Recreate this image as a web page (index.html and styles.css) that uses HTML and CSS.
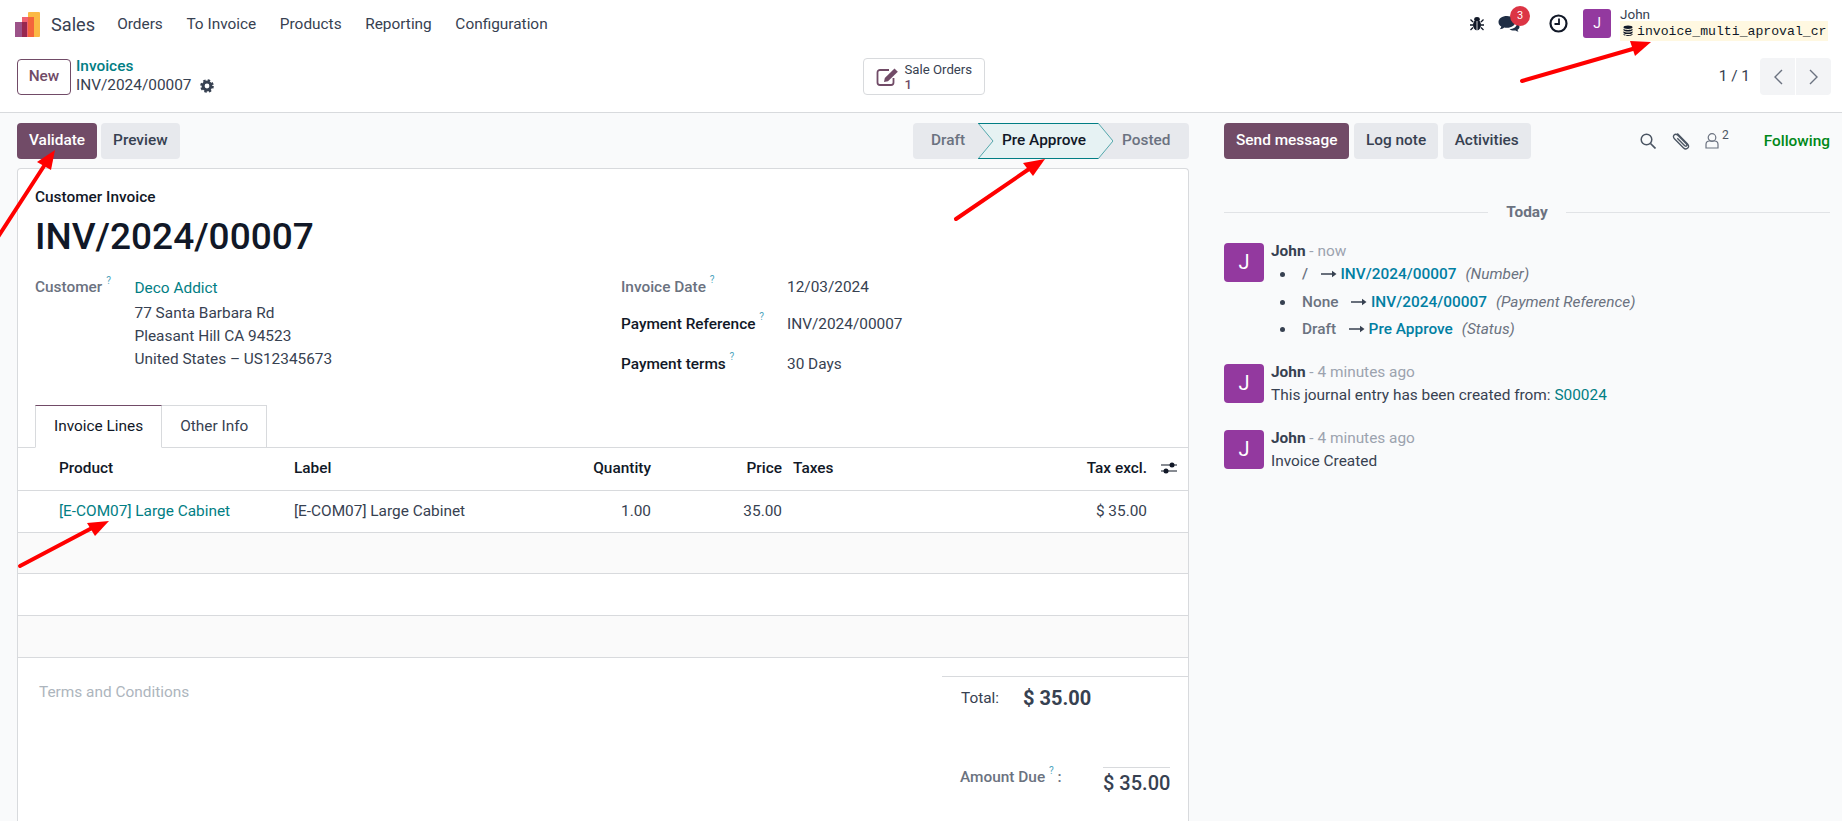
FILE: index.html
```html
<!DOCTYPE html>
<html lang="en">
<head>
<meta charset="utf-8">
<title>INV/2024/00007</title>
<link rel="stylesheet" href="styles.css">
</head>
<body>
<header class="navbar">
  <svg class="logo" viewBox="0 0 25 25" width="25" height="25">
    <rect x="13" y="0" width="12" height="25" rx="1" fill="#fbb945"/>
    <rect x="7" y="5" width="6" height="20" fill="#f06272"/>
    <rect x="13" y="5" width="6" height="20" fill="#f4653c"/>
    <rect x="0" y="10" width="7" height="15" fill="#9c5389"/>
    <rect x="7" y="10" width="5" height="15" fill="#98284f"/>
  </svg>
  <span class="brand">Sales</span>
  <nav class="menu">
    <span>Orders</span><span>To Invoice</span><span>Products</span><span>Reporting</span><span>Configuration</span>
  </nav>
  <div class="systray">
    <svg class="ico-bug" width="14" height="15" viewBox="0 0 14 15"><ellipse cx="7" cy="9" rx="4" ry="5.2" fill="#111827"/><ellipse cx="7" cy="3.2" rx="2.8" ry="2.2" fill="#111827"/><path d="M0.5 3.5 3 6M13.5 3.5 11 6M0 9h3M14 9h-3M0.5 14 3 11.5M13.5 14 11 11.5" stroke="#111827" stroke-width="1.3" fill="none"/><path d="M7 5v9" stroke="#fff" stroke-width=".8"/></svg>
    <span class="chat-wrap">
      <svg width="22" height="18" viewBox="0 0 22 18"><path d="M9 1C4 1 .5 3.6.5 7c0 2 1.200 3.500 2.800 4.600-.2 1-.8 1.900-1.600 2.700 1.800-.2 3.400-.9 4.500-1.800.9.2 1.800.3 2.800.3 4.700 0 8.300-2.600 8.300-5.800S13.700 1 9 1z" fill="#1f2e45"/><path d="M19 9c-.6 3-3.500 5-7.500 5.300 1.100.9 2.600 1.300 4.200 1.300.6 0 1.200-.1 1.800-.2.800.7 1.800 1.100 3 1.300-.5-.6-.9-1.200-1-1.900 1.300-.7 2-1.800 2-3 0-1-.9-2-2.500-2.800z" fill="#1f2e45"/></svg>
      <span class="badge">3</span>
    </span>
    <svg class="ico-clock" width="19" height="19" viewBox="0 0 19 19"><circle cx="9.500" cy="9.500" r="8" fill="none" stroke="#111827" stroke-width="2.200"/><path d="M10 4.500v5.500H5.500" fill="none" stroke="#111827" stroke-width="1.800"/></svg>
    <span class="avatar avatar-nav">J</span>
    <div class="user">
      <span class="user-name">John</span>
      <span class="db"><svg width="10" height="12" viewBox="0 0 10 11"><ellipse cx="5" cy="1.800" rx="4.500" ry="1.700" fill="#111827"/><path d="M.5 3.200c1.500 1.600 7.500 1.600 9 0v1.600c-1.500 1.600-7.500 1.600-9 0zM.5 5.800c1.500 1.600 7.500 1.600 9 0v1.600c-1.500 1.600-7.500 1.600-9 0zM.5 8.300c1.500 1.600 7.500 1.600 9 0v.9c-1.500 1.600-7.500 1.600-9 0z" fill="#111827"/></svg><span>invoice_multi_aproval_cr</span></span>
    </div>
  </div>
</header>

<section class="control">
  <button class="btn btn-new">New</button>
  <div class="crumbs">
    <a class="link">Invoices</a>
    <div class="crumb-current">INV/2024/00007
      <svg width="14" height="14" viewBox="0 0 14 14"><circle cx="7" cy="7" r="3.900" fill="none" stroke="#374151" stroke-width="3"/><circle cx="7" cy="7" r="5.700" fill="none" stroke="#374151" stroke-width="2.200" stroke-dasharray="2.400 2.080"/></svg>
    </div>
  </div>
  <div class="stat-wrap">
    <button class="stat">
      <svg width="24" height="20" viewBox="0 0 24 20"><path d="M13 3H4a2.500 2.500 0 0 0-2.500 2.500v10A2.500 2.500 0 0 0 4 18h11a2.500 2.500 0 0 0 2.500-2.500V11" fill="none" stroke="#714b67" stroke-width="1.800"/><path d="M8 15l.8-4L18.500 1.500l3.300 3.300L12 14.300z" fill="#714b67"/></svg>
      <span class="stat-text"><span>Sale Orders</span><span class="stat-num">1</span></span>
    </button>
  </div>
  <div class="pager">
    <span class="pager-val">1 / 1</span>
    <div class="pager-btns">
      <button class="pg"><svg width="10" height="16" viewBox="0 0 10 16"><path d="M9 1 2 8l7 7" fill="none" stroke="#6b7280" stroke-width="1.400"/></svg></button>
      <button class="pg"><svg width="10" height="16" viewBox="0 0 10 16"><path d="M1 1l7 7-7 7" fill="none" stroke="#6b7280" stroke-width="1.400"/></svg></button>
    </div>
  </div>
</section>

<main class="main">
  <div class="form-col">
    <div class="statusline">
      <div class="actions">
        <button class="btn btn-primary">Validate</button>
        <button class="btn btn-secondary">Preview</button>
      </div>
      <div class="statusbar">
        <span class="st st-draft">Draft</span>
        <span class="st st-current">
          <svg class="st-shape" viewBox="0 0 135 36" preserveAspectRatio="none"><polygon points="0,0 120,0 135,18 120,36 0,36 15,18" fill="#e6f2f3"/><path d="M0 .5H120M0 35.500H120" stroke="#017e84" stroke-width="1.200" fill="none"/><path d="M0 0 15 18 0 36M120 0 135 18 120 36" stroke="#2f969b" stroke-width=".8" fill="none"/></svg>
          <span class="st-label">Pre Approve</span>
        </span>
        <span class="st st-posted">Posted</span>
      </div>
    </div>

    <div class="sheet">
      <div class="sheet-head">
        <div class="doc-type">Customer Invoice</div>
        <h1 class="doc-title">INV/2024/00007</h1>
        <div class="fields">
          <div class="field-col field-left">
            <span class="lbl lbl-muted">Customer <sup>?</sup></span>
            <div class="addr">
              <a class="link">Deco Addict</a>
              <span>77 Santa Barbara Rd</span>
              <span>Pleasant Hill CA 94523</span>
              <span>United States – US12345673</span>
            </div>
          </div>
          <div class="field-col field-right">
            <span class="lbl lbl-muted r1">Invoice Date <sup>?</sup></span><span class="r1">12/03/2024</span>
            <span class="lbl lbl-bold r2">Payment Reference <sup>?</sup></span><span class="r2">INV/2024/00007</span>
            <span class="lbl lbl-bold r3">Payment terms <sup>?</sup></span><span class="r3">30 Days</span>
          </div>
        </div>
      </div>

      <div class="tabs">
        <span class="tab tab-active">Invoice Lines</span>
        <span class="tab">Other Info</span>
      </div>

      <table class="lines">
        <colgroup><col class="c1"><col class="c2"><col class="c3"><col class="c4"><col class="c5"><col class="c6"><col class="c7"></colgroup>
        <thead>
          <tr><th class="first">Product</th><th>Label</th><th class="num">Quantity</th><th class="num tight">Price</th><th>Taxes</th><th class="num">Tax excl.</th>
          <th class="opt"><svg width="16" height="14" viewBox="0 0 16 14"><path d="M0 4h16M0 10h16" stroke="#111827" stroke-width="1.200"/><circle cx="11" cy="4" r="2.500" fill="#111827"/><circle cx="5" cy="10" r="2.500" fill="#111827"/></svg></th></tr>
        </thead>
        <tbody>
          <tr class="filled"><td class="first link">[E-COM07] Large Cabinet</td><td>[E-COM07] Large Cabinet</td><td class="num">1.00</td><td class="num tight">35.00</td><td></td><td class="num">$ 35.00</td><td></td></tr>
          <tr class="alt"><td colspan="7"></td></tr>
          <tr><td colspan="7"></td></tr>
          <tr class="alt"><td colspan="7"></td></tr>
        </tbody>
      </table>

      <div class="foot">
        <div class="terms">Terms and Conditions</div>
        <div class="totals">
          <div class="total-row"><span class="total-lbl">Total:</span><span class="total-val">$ 35.00</span></div>
          <div class="due-row"><span class="due-lbl">Amount Due <sup>?</sup> :</span><span class="due-val">$ 35.00</span></div>
        </div>
      </div>
    </div>
  </div>

  <aside class="chatter">
    <div class="chat-top">
      <button class="btn btn-primary">Send message</button>
      <button class="btn btn-secondary">Log note</button>
      <button class="btn btn-secondary">Activities</button>
      <div class="chat-tools">
        <svg width="16" height="16" viewBox="0 0 16 16"><circle cx="6.500" cy="6.500" r="5.300" fill="none" stroke="#4b5563" stroke-width="1.500"/><path d="M10.500 10.500 15.500 15.500" stroke="#4b5563" stroke-width="1.700"/></svg>
        <svg class="clip" width="18" height="18" viewBox="0 0 17 17"><path d="M5 1.500 14.500 11c1.500 1.500 1.500 3.200.4 4.200s-2.800 1-4.200-.4L2.300 6.300C1.200 5.200 1 3.800 2 2.800s2.400-.8 3.500.3l8 8c.7.700.8 1.500.3 2s-1.300.4-2-.3L5 6" fill="none" stroke="#4b5563" stroke-width="1.300"/></svg>
        <span class="followers"><svg width="14" height="16" viewBox="0 0 14 16"><circle cx="7" cy="4.500" r="3.800" fill="none" stroke="#6b7280" stroke-width="1.200"/><path d="M1 15v-3.500C1 9.500 2.500 8 4.500 8h5c2 0 3.500 1.500 3.500 3.500V15z" fill="none" stroke="#6b7280" stroke-width="1.200"/></svg><sup>2</sup></span>
        <span class="following">Following</span>
      </div>
    </div>

    <div class="today"><span>Today</span></div>

    <article class="msg">
      <span class="avatar">J</span>
      <div class="msg-body">
        <div class="msg-head"><b>John</b> - now</div>
        <ul class="changes">
          <li><span class="old">/</span><svg class="arr" width="16" height="8" viewBox="0 0 16 8"><path d="M0 4h12" stroke="#374151" stroke-width="1.500"/><path d="M11 .8 15.500 4 11 7.200z" fill="#374151"/></svg><a class="new">INV/2024/00007</a><i>(Number)</i></li>
          <li><span class="old">None</span><svg class="arr" width="16" height="8" viewBox="0 0 16 8"><path d="M0 4h12" stroke="#374151" stroke-width="1.500"/><path d="M11 .8 15.500 4 11 7.200z" fill="#374151"/></svg><a class="new">INV/2024/00007</a><i>(Payment Reference)</i></li>
          <li><span class="old">Draft</span><svg class="arr" width="16" height="8" viewBox="0 0 16 8"><path d="M0 4h12" stroke="#374151" stroke-width="1.500"/><path d="M11 .8 15.500 4 11 7.200z" fill="#374151"/></svg><a class="new">Pre Approve</a><i>(Status)</i></li>
        </ul>
      </div>
    </article>
    <article class="msg">
      <span class="avatar">J</span>
      <div class="msg-body">
        <div class="msg-head"><b>John</b> - 4 minutes ago</div>
        <div class="msg-text">This journal entry has been created from: <a class="link">S00024</a></div>
      </div>
    </article>
    <article class="msg">
      <span class="avatar">J</span>
      <div class="msg-body">
        <div class="msg-head"><b>John</b> - 4 minutes ago</div>
        <div class="msg-text">Invoice Created</div>
      </div>
    </article>
  </aside>
</main>

<svg class="annotations" width="1842" height="821" viewBox="0 0 1842 821">
  <g stroke="#ff0000" stroke-width="4" stroke-linecap="round" fill="#ff0000">
    <path d="M-2 237 44 166"/>
    <path d="M956 219 1032 167"/>
    <path d="M1522 81 1636 48"/>
    <path d="M20 566 92 528"/>
  </g>
  <g fill="#ff0000">
    <polygon points="55,150 37,162 51,170"/>
    <polygon points="1045,159 1023,163 1033,176"/>
    <polygon points="1651,42 1630,41 1635,56"/>
    <polygon points="109,521 87,523 95,536"/>
  </g>
</svg>
</body>
</html>
```

FILE: styles.css
```css
* { box-sizing: border-box; }
html, body { margin: 0; height: 821px; overflow: hidden; }
body {
  position: relative;
  font-family: Roboto, "Noto Sans", sans-serif;
  font-size: 15.4px;
  line-height: 21px;
  color: #374151;
  background: #f9fafb;
}
button { font: inherit; border: 0; margin: 0; cursor: pointer; }
sup { font-size: 10px; line-height: 0; color: #4ea5bd; font-weight: 400; position: relative; top: -2px; vertical-align: super; }
.link { color: #017e84; }

/* navbar */
.navbar { height: 46px; background: #fff; display: flex; align-items: center; padding: 1px 14px 0 15px; }
.logo { flex: none; margin-top: 1px; }
.brand { font-size: 18.2px; margin-left: 11px; padding-top: 2px; }
.menu { display: flex; gap: 23.6px; margin-left: 22px; padding-top: 2px; }
.systray { margin-left: auto; display: flex; align-items: center; }
.ico-bug { margin-right: 14px; }
.chat-wrap { position: relative; display: block; width: 22px; height: 18px; margin-right: 29px; }
.badge { position: absolute; left: 12px; top: -9px; width: 20px; height: 20px; border-radius: 50%; background: #dc3545; color: #fff; font-size: 11px; line-height: 19px; text-align: center; }
.ico-clock { margin-right: 15px; }
.avatar { display: flex; flex: none; align-items: center; justify-content: center; width: 40px; height: 39px; border-radius: 4px; background: #93399f; color: #fff; font-size: 20px; }
.avatar-nav { width: 28px; height: 29px; font-size: 14px; margin-right: 9px; border-radius: 3px; }
.user { display: flex; flex-direction: column; width: 208px; margin-top: 1px; }
.user-name { line-height: 14px; font-size: 13.5px; }
.db { display: flex; align-items: center; gap: 4px; height: 20px; padding-left: 3px; background: #fff8e1; color: #111827; font-family: "Liberation Mono", monospace; font-size: 13.17px; }

/* control panel */
.control { height: 67px; background: #fff; border-bottom: 1px solid #d8dadd; display: flex; align-items: flex-start; padding: 12px 11px 0 17px; }
.btn { height: 36px; padding: 0 12px 2px; border-radius: 4px; font-weight: 500; font-size: 15.4px; }
.btn-new { background: #fff; border: 1px solid #714b67; color: #714b67; width: 54px; padding: 0 0 2px; margin-top: 1px; }
.crumbs { margin-left: 5px; line-height: 19px; margin-top: -1px; }
.crumbs .link { display: block; font-weight: 500; }
.crumb-current { display: flex; align-items: center; gap: 8px; }
.stat-wrap { margin-left: 649px; }
.stat { display: flex; align-items: center; width: 122px; height: 37px; padding: 0 0 0 12px; gap: 5px; background: #fff; border: 1px solid #d8dadd; border-radius: 4px; color: #374151; font-size: 13.2px; text-align: left; }
.stat-text { display: flex; flex-direction: column; line-height: 15px; }
.stat-num { color: #714b67; font-weight: 500; }
.pager { margin-left: auto; display: flex; align-items: center; gap: 10px; }
.pager-btns { display: flex; gap: 1px; }
.pg { width: 35px; height: 37px; background: #f3f4f6; display: flex; align-items: center; justify-content: center; }
.pg:first-child { border-radius: 4px 0 0 4px; }
.pg:last-child { border-radius: 0 4px 4px 0; }

/* main */
.main { display: flex; padding: 0 12px 0 17px; gap: 35px; height: 708px; overflow: hidden; }
.form-col { width: 1172px; flex: none; }
.statusline { display: flex; justify-content: space-between; padding-top: 10px; height: 55px; }
.actions { display: flex; gap: 4px; }
.btn-primary { background: #714b67; color: #fff; }
.btn-secondary { background: #e7e9ed; color: #374151; }
.statusbar { display: flex; width: 276px; height: 36px; background: #e7e9ed; border-radius: 4px; font-weight: 500; color: #6b7280; }
.st { display: flex; align-items: center; padding-bottom: 2px; }
.st-draft { padding-left: 18px; width: 65px; flex: none; }
.st-current { position: relative; width: 135px; flex: none; color: #111827; justify-content: center; padding-right: 3px; }
.st-shape { position: absolute; left: 0; top: 0; width: 100%; height: 100%; }
.st-label { position: relative; }
.st-posted { padding-left: 9px; }

/* sheet */
.sheet { background: #fff; border: 1px solid #d8dadd; border-bottom: 0; border-radius: 4px 4px 0 0; height: 700px; }
.sheet-head { padding: 18px 17px 0; height: 236px; }
.doc-type { font-weight: 500; color: #111827; }
.doc-title { margin: 7px 0 0; font-size: 37px; line-height: 44px; font-weight: 500; color: #111827; }
.fields { display: flex; margin-top: 18px; }
.field-col { display: grid; }
.field-left { width: 586px; grid-template-columns: 99.5px 1fr; }
.field-right { grid-template-columns: 166px 1fr; grid-template-rows: 30px 44px 36px; align-items: center; margin-top: -5px; }
.lbl { font-weight: 500; }
.lbl-muted { color: #6b7280; }
.lbl-bold { color: #111827; }
.addr { display: flex; flex-direction: column; line-height: 23px; }
.addr .link { margin-bottom: 2px; }

.tabs { display: flex; height: 43px; padding-left: 17px; border-bottom: 1px solid #d8dadd; }
.tab { height: 43px; padding: 0 18px; line-height: 41px; border: 1px solid #d8dadd; border-left: 0; background: #fff; }
.tab-active { color: #111827; border-left: 1px solid #d8dadd; border-top-color: #714b67; border-bottom-color: #fff; }

.lines { width: 1170px; table-layout: fixed; border-collapse: collapse; }
.c1 { width: 268px; } .c2 { width: 234px; } .c3 { width: 139px; } .c4 { width: 126px; } .c5 { width: 215px; } .c6 { width: 155px; } .c7 { width: 33px; }
.lines th, .lines td { padding: 0 8px; height: 41.75px; border-bottom: 1px solid #d8dadd; text-align: left; font-weight: 400; }
.lines th { font-weight: 500; color: #111827; height: 42px; }
.lines .filled td { height: 42px; padding-top: 1px; }
.lines .first { padding-left: 41px; }
.lines .num { text-align: right; }
.lines .tight { padding-right: 3px; }
.lines .opt { padding: 4px 0 0 6px; }
.lines .alt td { background: #fafafa; }

.foot { display: flex; justify-content: space-between; padding-top: 18px; }
.terms { color: #adb5bd; padding: 6px 0 0 21px; }
.totals { width: 246px; border-top: 1px solid #d8dadd; padding-top: 10px; }
.total-row { display: flex; align-items: center; padding-left: 19px; height: 24px; }
.total-lbl { width: 62px; }
.total-val { font-size: 20px; font-weight: 700; }
.due-row { display: flex; align-items: flex-start; margin-top: 56px; padding-left: 18px; }
.due-lbl { width: 143px; color: #6b7280; font-weight: 500; white-space: nowrap; }
.due-val { font-size: 20px; font-weight: 500; border-top: 1px solid #d8dadd; padding-top: 3px; line-height: 24px; }

/* chatter */
.chatter { flex: none; width: 606px; }
.chat-top { display: flex; gap: 4.5px; padding-top: 10px; }
.chat-tools { margin-left: auto; display: flex; align-items: center; }
.clip { margin-left: 16px; }
.followers { margin-left: 15px; display: flex; align-items: center; }
.followers sup { color: #4b5563; font-size: 12px; top: -6px; margin-left: 3px; }
.following { color: #008818; font-weight: 500; margin-left: 35px; }
.today { display: flex; align-items: center; gap: 18px; margin-top: 43px; font-weight: 700; color: #6b7280; }
.today::before, .today::after { content: ""; flex: 1; height: 1px; background: #e1e3e6; }
.msg { display: flex; gap: 7px; margin-top: 20px; }
.msg + .msg { margin-top: 24px; }
.msg:nth-child(4) { margin-top: 18px; }
.msg-head { color: #9ca3af; line-height: 16px; }
.msg-head b { color: #374151; font-weight: 700; }
.changes { margin: 4px 0 0; padding-left: 31px; list-style: none; }
.changes li { position: relative; line-height: 22px; margin-bottom: 5.5px; white-space: nowrap; }
.changes li::before { content: ""; position: absolute; left: -22px; top: 9px; width: 5px; height: 5px; border-radius: 50%; background: #374151; }
.old { font-weight: 500; color: #6b7280; margin-right: 13px; }
.arr { vertical-align: 1px; margin-right: 3.5px; }
.new { color: #017fa3; font-weight: 500; }
.changes i { color: #6b7280; margin-left: 9px; }
.msg-text { margin-top: 5px; }

/* annotation arrows drawn over the screenshot */
.annotations { position: absolute; left: 0; top: 0; pointer-events: none; }
```
